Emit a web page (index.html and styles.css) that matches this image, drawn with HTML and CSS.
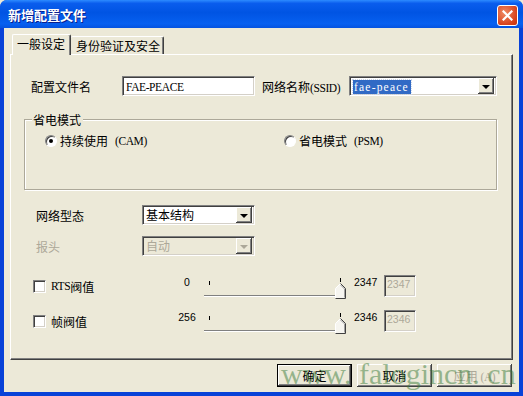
FILE: index.html
```
<!DOCTYPE html>
<html lang="zh-CN">
<head>
    <meta charset="UTF-8">
    <title>新增配置文件</title>
    <link rel="stylesheet" href="styles.css">
</head>
<body>
    <div class="window">
        <div class="titlebar">
            <span class="title">新增配置文件</span>
            <span class="close">
                <svg width="11" height="11" viewBox="0 0 11 11"><path d="M1.5 1.5 L9.5 9.5 M9.5 1.5 L1.5 9.5" stroke="#fff" stroke-width="2.2" stroke-linecap="square"/></svg>
            </span>
        </div>

        <div class="body">
            <div class="tabs">
                <div class="tab tab-general active">一般设定</div>
                <div class="tab tab-auth">身份验证及安全</div>
            </div>

            <div class="panel">
                <div class="row row-name">
                    <span class="lbl lbl-name">配置文件名</span>
                    <div class="field text-input"><span class="latin">FAE-PEACE</span></div>
                    <span class="lbl lbl-ssid">网络名称<span class="latin">(SSID)</span></span>
                    <div class="field combo combo-ssid">
                        <span class="combo-text"><span class="sel latin">fae-peace</span></span>
                        <span class="drop"><span class="arrow"></span></span>
                    </div>
                </div>

                <div class="group">
                    <div class="group-title">省电模式</div>
                    <div class="radios">
                        <div class="radio-item r-cam"><span class="radio checked"></span><span>持续使用</span><span class="latin spaced">(CAM)</span></div>
                        <div class="radio-item r-psm"><span class="radio"></span><span>省电模式</span><span class="latin spaced">(PSM)</span></div>
                    </div>
                </div>

                <div class="row row-mode">
                    <span class="lbl lbl-wide">网络型态</span>
                    <div class="field combo combo-small">
                        <span class="combo-text">基本结构</span>
                        <span class="drop"><span class="arrow"></span></span>
                    </div>
                </div>

                <div class="row row-preamble disabled">
                    <span class="lbl lbl-wide">报头</span>
                    <div class="field combo combo-small">
                        <span class="combo-text">自动</span>
                        <span class="drop"><span class="arrow"></span></span>
                    </div>
                </div>

                <div class="row row-slider row-rts">
                    <div class="check-area"><span class="checkbox"></span><span class="latin">RTS</span>阀值</div>
                    <span class="min-val">0</span>
                    <svg class="slider" width="142" height="24" viewBox="0 0 142 24">
                        <line x1="5.5" y1="6" x2="5.5" y2="10" stroke="#000"/>
                        <line x1="136.5" y1="3" x2="136.5" y2="7" stroke="#000"/>
                        <line x1="0" y1="20.5" x2="134" y2="20.5" stroke="#808080"/>
                        <line x1="0" y1="21.5" x2="134" y2="21.5" stroke="#fff"/>
                        <path d="M131.5 23.5 L131.5 13.5 L136.5 8.5 L141.5 13.5 L141.5 23.5 Z" fill="#f6f5f0"/>
                        <path d="M131.5 23.5 L131.5 13.5 L136.5 8.5" fill="none" stroke="#fff"/>
                        <path d="M136.5 8.5 L141.5 13.5 L141.5 23.5 L131.5 23.5" fill="none" stroke="#404040"/>
                        <path d="M136.5 10 L140.5 14 L140.5 22.5" fill="none" stroke="#a0a0a0"/>
                    </svg>
                    <span class="max-val">2347</span>
                    <div class="field num-box">2347</div>
                </div>

                <div class="row row-slider row-frag">
                    <div class="check-area"><span class="checkbox"></span>帧阀值</div>
                    <span class="min-val">256</span>
                    <svg class="slider" width="142" height="24" viewBox="0 0 142 24">
                        <line x1="5.5" y1="6" x2="5.5" y2="10" stroke="#000"/>
                        <line x1="136.5" y1="3" x2="136.5" y2="7" stroke="#000"/>
                        <line x1="0" y1="20.5" x2="134" y2="20.5" stroke="#808080"/>
                        <line x1="0" y1="21.5" x2="134" y2="21.5" stroke="#fff"/>
                        <path d="M131.5 23.5 L131.5 13.5 L136.5 8.5 L141.5 13.5 L141.5 23.5 Z" fill="#f6f5f0"/>
                        <path d="M131.5 23.5 L131.5 13.5 L136.5 8.5" fill="none" stroke="#fff"/>
                        <path d="M136.5 8.5 L141.5 13.5 L141.5 23.5 L131.5 23.5" fill="none" stroke="#404040"/>
                        <path d="M136.5 10 L140.5 14 L140.5 22.5" fill="none" stroke="#a0a0a0"/>
                    </svg>
                    <span class="max-val">2346</span>
                    <div class="field num-box">2346</div>
                </div>
            </div>

            <div class="buttons">
                <button class="btn default">确定</button>
                <button class="btn">取消</button>
                <button class="btn" disabled>应用 <span class="latin">(A)</span></button>
            </div>
        </div>

        <div class="watermark">www. falogincn. cn</div>
    </div>
</body>
</html>
```

FILE: styles.css
```
body {
    margin: 0;
    background: #ece9d8;
}
.window {
    position: relative;
    width: 523px;
    height: 396px;
    display: flex;
    flex-direction: column;
    background: #0842d8;
    border-radius: 7px 7px 0 0;
    overflow: hidden;
    font-family: "Noto Sans CJK SC", sans-serif;
    font-size: 12px;
    color: #000;
}
.titlebar {
    height: 28px;
    flex: none;
    display: flex;
    align-items: center;
    padding: 0 5px 0 8px;
    background: linear-gradient(#2d8bff 0, #0a5ded 12%, #0054e3 45%, #0760f0 85%, #0553e0 100%);
}
.title {
    flex: 1;
    color: #fff;
    font-weight: bold;
    font-size: 13px;
    text-shadow: 1px 1px #0a1e8c;
}
.close {
    width: 19px;
    height: 19px;
    margin-top: 2px;
    display: flex;
    align-items: center;
    justify-content: center;
    border: 1px solid #fff;
    border-radius: 3px;
    background: radial-gradient(circle at 35% 35%, #ef8a64, #d8421c 70%, #c1330f);
}
.body {
    flex: 1;
    display: flex;
    flex-direction: column;
    margin: 0 4px 4px;
    padding: 6px 6px 0;
    background: #ece9d8;
}

/* tabs */
.tabs {
    height: 20px;
    display: flex;
    align-items: flex-end;
    padding-left: 2px;
    position: relative;
    z-index: 1;
}
.tab {
    height: 18px;
    line-height: 18px;
    padding: 0 3px 0 4px;
    border-top: 1px solid #fff;
    border-left: 1px solid #fff;
    border-right: 1px solid #404040;
    box-shadow: inset -1px 0 #808080;
    border-radius: 2px 2px 0 0;
    background: #ece9d8;
    box-sizing: border-box;
}
.tab.active {
    height: 21px;
    line-height: 17px;
    margin-bottom: -1px;
    padding: 0 5px 0 4px;
}
.tab-auth {
    border-left: none;
    padding-left: 5px;
}

/* panel */
.panel {
    height: 306px;
    box-sizing: border-box;
    flex: none;
    border: 1px solid;
    border-color: #fff #404040 #404040 #fff;
    box-shadow: inset -1px -1px #808080;
}
.row {
    display: flex;
    align-items: center;
}
.row-name {
    height: 20px;
    margin: 21px 0 0 20px;
}
.lbl-name {
    width: 91px;
}
.lbl-ssid {
    width: 87px;
    margin-left: 7px;
}
.latin {
    font-family: "Liberation Serif", serif;
    font-size: 11.5px;
    letter-spacing: -0.4px;
}
.spaced {
    margin-left: 7px;
}

/* sunken fields */
.field {
    box-sizing: border-box;
    border: 1px solid;
    border-color: #808080 #fff #fff #808080;
    box-shadow: inset 1px 1px #404040, inset -1px -1px #d4d0c8;
    background: #fff;
}
.text-input {
    width: 133px;
    height: 20px;
    padding: 2px 3px;
    line-height: 14px;
}
.combo {
    height: 20px;
    display: flex;
    align-items: center;
    padding: 2px;
}
.combo-ssid {
    width: 148px;
}
.combo-small {
    width: 113px;
}
.combo-text {
    flex: 1;
    padding-left: 1px;
    line-height: 14px;
}
.sel {
    display: inline-block;
    padding: 0 2px 0 1px;
    line-height: 14px;
    letter-spacing: 1.2px;
    background: #316ac5;
    color: #fff;
    outline: 1px dotted #cbd6ea;
}
.drop {
    width: 16px;
    height: 16px;
    display: flex;
    align-items: center;
    justify-content: center;
    background: #ece9d8;
    box-shadow: inset -1px -1px #404040, inset 1px 1px #fff, inset -2px -2px #808080;
}
.arrow {
    width: 0;
    height: 0;
    border-left: 4px solid transparent;
    border-right: 4px solid transparent;
    border-top: 4px solid #000;
    margin-top: 1px;
}

/* group box */
.group {
    width: 473px;
    height: 71px;
    box-sizing: border-box;
    margin: 23px 0 0 13px;
    border: 1px solid #aca899;
    box-shadow: inset 1px 1px #fff, 1px 1px #fff;
}
.group-title {
    width: fit-content;
    height: 13px;
    line-height: 13px;
    margin: -7px 0 0 7px;
    padding: 0 2px 0 1px;
    background: #ece9d8;
}
.radios {
    display: flex;
    margin: 8px 0 0 20px;
    height: 13px;
    align-items: center;
}
.radio-item {
    display: flex;
    align-items: center;
}
.r-cam {
    width: 239px;
}
.radio {
    width: 12px;
    height: 12px;
    margin-right: 3px;
    box-sizing: border-box;
    border-radius: 50%;
    border: 1px solid;
    border-color: #808080 #fff #fff #808080;
    background: #fff;
    box-shadow: inset 1px 1px #404040;
    display: flex;
    align-items: center;
    justify-content: center;
}
.radio.checked::after {
    content: "";
    width: 4px;
    height: 4px;
    border-radius: 50%;
    background: #000;
}

/* rows below the group */
.row-mode {
    height: 20px;
    margin: 15px 0 0 25px;
}
.row-preamble {
    height: 20px;
    margin: 11px 0 0 25px;
}
.lbl-wide {
    width: 106px;
}
.disabled .lbl,
.disabled .combo-text {
    color: #aca899;
}
.disabled .combo {
    background: #ece9d8;
}
.disabled .arrow {
    border-top-color: #aca899;
}
.row-slider {
    height: 22px;
    margin-left: 22px;
}
.row-rts {
    margin-top: 19px;
}
.row-frag {
    margin-top: 13px;
}
.check-area {
    width: 139px;
    display: flex;
    align-items: center;
}
.checkbox {
    width: 13px;
    height: 13px;
    margin-right: 5px;
    box-sizing: border-box;
    border: 1px solid;
    border-color: #808080 #fff #fff #808080;
    box-shadow: inset 1px 1px #404040, inset -1px -1px #d4d0c8;
    background: #fff;
}
.min-val,
.max-val {
    font-family: "Liberation Sans", sans-serif;
    font-size: 10.5px;
    align-self: flex-start;
    margin-top: 1px;
}
.min-val {
    width: 30px;
    text-align: center;
}
.slider {
    margin-left: 2px;
    overflow: visible;
    align-self: flex-start;
}
.max-val {
    width: 30px;
    margin-left: 8px;
}
.num-box {
    width: 32px;
    height: 22px;
    padding: 2px 0 0 2px;
    background: #ece9d8;
    color: #aca899;
    font-family: "Liberation Sans", sans-serif;
    font-size: 10.5px;
}

/* buttons */
.buttons {
    display: flex;
    justify-content: flex-end;
    gap: 5px;
    margin: 4px 1px 0 0;
}
.btn {
    width: 75px;
    height: 23px;
    padding: 0;
    border: none;
    background: #ece9d8;
    font-family: "Noto Sans CJK SC", sans-serif;
    font-size: 12px;
    color: #000;
    box-shadow: inset -1px -1px #404040, inset 1px 1px #fff, inset -2px -2px #808080;
}
.btn.default {
    border: 1px solid #000;
}
.btn:disabled {
    color: #aca899;
}

.watermark {
    position: absolute;
    left: 281px;
    top: 357px;
    font-family: "Liberation Serif", serif;
    font-size: 30px;
    color: rgba(60, 125, 60, 0.5);
    white-space: nowrap;
    pointer-events: none;
}
```
